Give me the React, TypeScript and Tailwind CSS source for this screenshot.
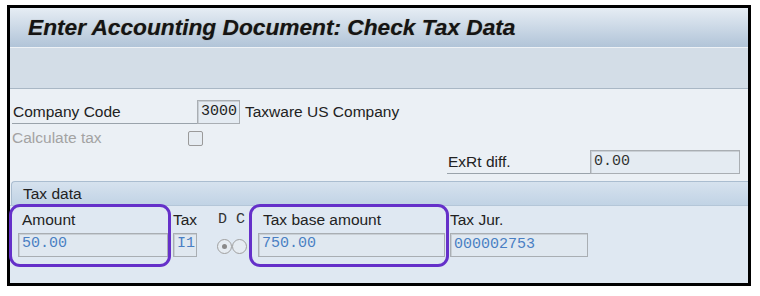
import React from "react";

const sans = { fontFamily: '"Liberation Sans", Arial, sans-serif' };
const mono = { fontFamily: '"Liberation Mono", "Courier New", monospace' };

function Field({ w, value, className = "" }: { w: string; value: string; className?: string }) {
  return (
    <div
      className={`${w} h-[24px] border border-[#a9aeb3] bg-[#e0e8f0] shadow-[inset_1px_1px_0_#c9cfd5] flex items-center pl-[3px] text-[15px] text-[#4a7fc3] ${className}`}
      style={mono}
    >
      {value}
    </div>
  );
}

function Radio({ checked }: { checked?: boolean }) {
  return (
    <div className="w-[15px] h-[15px] rounded-full border border-[#a0a0a0] bg-[#e6ecf2] flex items-center justify-center">
      {checked && <div className="w-[5px] h-[5px] rounded-full bg-[#8a8a8a]" />}
    </div>
  );
}

export default function App() {
  return (
    <div className="relative w-[760px] h-[296px] bg-white pl-[7px] pt-[5px]" style={sans}>
      <div className="w-[744px] h-[281px] border-[3px] border-black flex flex-col overflow-hidden">
        {/* Title */}
        <div className="h-[39px] bg-gradient-to-b from-[#e6edf4] to-[#b1c4d8] flex items-center pl-[18px]">
          <span
            className="text-[22.7px] font-bold italic text-[#141414] [text-shadow:0_0_1px_rgba(90,60,20,0.5)]"
            style={sans}
          >
            Enter Accounting Document: Check Tax Data
          </span>
        </div>
        {/* Toolbar */}
        <div className="h-[41px] bg-[#d3dde7] border-t border-[#eef2f6]" />
        <div className="h-[1px] bg-[#a9b7c5]" />
        {/* Section 1 */}
        <div className="h-[92px] bg-[#ebf0f5] pt-[11px] flex flex-col text-[15.5px] text-[#222]">
          <div className="flex h-[24px] items-stretch">
            <div className="ml-[2px] w-[185px] border-b border-[#9aa3ab] flex items-center pl-[1px]">
              Company Code
            </div>
            <Field w="w-[43px]" value="3000" className="text-[#222] bg-[#e4ebf2]" />
            <div className="ml-[5px] flex items-center">Taxware US Company</div>
          </div>
          <div className="flex h-[20px] mt-[4px] items-center">
            <div className="ml-[2px] w-[176px] text-[#a3a3a3]">Calculate tax</div>
            <div className="w-[15px] h-[15px] border border-[#9a9a9a] rounded-[2px] bg-[#e6ecf2]" />
          </div>
          <div className="flex h-[24px] mt-[2px] items-stretch">
            <div className="ml-[437px] w-[143px] border-b border-[#9aa3ab] flex items-center pl-[1px]">
              ExRt diff.
            </div>
            <Field w="w-[150px]" value="0.00" className="text-[#333] bg-[#e4ebf2]" />
          </div>
        </div>
        {/* Tax data header */}
        <div className="h-[24px] bg-[#ebf0f5]">
          <div className="h-full ml-[1px] rounded-tl-[4px] border-t border-l border-[#aabdd0] bg-gradient-to-b from-[#d6e2ee] to-[#c1d3e5] flex items-center pl-[11px] text-[15.5px] text-[#222]">
            Tax data
          </div>
        </div>
        {/* Lower */}
        <div className="flex-1 bg-[#dfe8f2] border-t border-[#b4c6d8] text-[15.5px] text-[#222] flex flex-col pt-[4px]">
          <div className="flex h-[20px] items-center">
            <div className="ml-[12px] w-[151px]">Amount</div>
            <div className="w-[45px]">Tax</div>
            <div className="w-[44px] text-[#333] text-[15px]" style={mono}>D C</div>
            <div className="ml-[1px] w-[187px]">Tax base amount</div>
            <div>Tax Jur.</div>
          </div>
          <div className="flex h-[25px] mt-[2px] items-center">
            <Field w="w-[150px]" value="50.00" className="ml-[8px]" />
            <Field w="w-[24px]" value="I1" className="ml-[5px] pl-[2px]" />
            <div className="ml-[20px] flex items-center mt-[4px]">
              <Radio checked />
              <Radio />
            </div>
            <Field w="w-[187px]" value="750.00" className="ml-[11px]" />
            <Field w="w-[138px]" value="000002753" className="ml-[5px] mt-[1px]" />
          </div>
        </div>
      </div>
      {/* Highlight annotations */}
      <div className="absolute left-[9px] top-[204px] w-[162px] h-[63px] border-[3px] border-[#6530c9] rounded-[11px]" />
      <div className="absolute left-[249px] top-[204px] w-[200px] h-[63px] border-[3px] border-[#6530c9] rounded-[11px]" />
    </div>
  );
}
